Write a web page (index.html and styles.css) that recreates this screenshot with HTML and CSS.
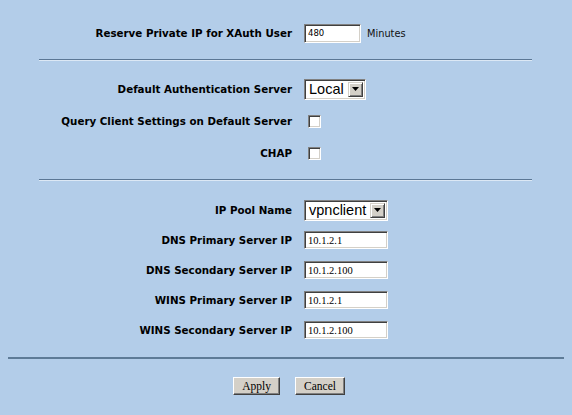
FILE: index.html
```html
<!DOCTYPE html>
<html>
<head>
<meta charset="utf-8">
<link rel="stylesheet" href="styles.css">
</head>
<body>
<div class="page">
  <div class="section s1">
    <div class="row">
      <div class="label">Reserve Private IP for XAuth User</div>
      <div class="ctrl"><span class="field field-min">480</span><span class="unit">Minutes</span></div>
    </div>
  </div>
  <div class="sep"></div>
  <div class="section s2">
    <div class="row">
      <div class="label">Default Authentication Server</div>
      <div class="ctrl"><span class="select sel-local"><span class="sel-text">Local</span><span class="sel-btn"><svg width="7" height="4" viewBox="0 0 7 4"><path d="M0 0h7L3.5 4z" fill="#000"/></svg></span></span></div>
    </div>
    <div class="row">
      <div class="label">Query Client Settings on Default Server</div>
      <div class="ctrl"><span class="check"></span></div>
    </div>
    <div class="row">
      <div class="label">CHAP</div>
      <div class="ctrl"><span class="check"></span></div>
    </div>
  </div>
  <div class="sep"></div>
  <div class="section s3">
    <div class="row">
      <div class="label">IP Pool Name</div>
      <div class="ctrl"><span class="select sel-pool"><span class="sel-text">vpnclient</span><span class="sel-btn"><svg width="7" height="4" viewBox="0 0 7 4"><path d="M0 0h7L3.5 4z" fill="#000"/></svg></span></span></div>
    </div>
    <div class="row">
      <div class="label">DNS Primary Server IP</div>
      <div class="ctrl"><span class="field field-ip">10.1.2.1</span></div>
    </div>
    <div class="row">
      <div class="label">DNS Secondary Server IP</div>
      <div class="ctrl"><span class="field field-ip">10.1.2.100</span></div>
    </div>
    <div class="row">
      <div class="label">WINS Primary Server IP</div>
      <div class="ctrl"><span class="field field-ip">10.1.2.1</span></div>
    </div>
    <div class="row">
      <div class="label">WINS Secondary Server IP</div>
      <div class="ctrl"><span class="field field-ip">10.1.2.100</span></div>
    </div>
  </div>
  <div class="sep-wide"></div>
  <div class="buttons">
    <span class="btn btn-apply">Apply</span>
    <span class="btn btn-cancel">Cancel</span>
  </div>
</div>
</body>
</html>
```
FILE: styles.css
```css
html, body {
  margin: 0;
  padding: 0;
  background: #b3cde9;
}
body {
  width: 572px;
  height: 415px;
  overflow: hidden;
  font-family: "DejaVu Sans", Verdana, sans-serif;
  color: #000;
}
.page {
  padding-top: 18px;
}
.section {
  display: flex;
  flex-direction: column;
}
.s2 {
  margin-top: 13px;
  gap: 2px;
}
.s3 {
  margin-top: 14px;
}
.row {
  display: grid;
  grid-template-columns: 292px auto;
  column-gap: 12px;
  align-items: center;
  height: 30px;
}
.label {
  text-align: right;
  font-weight: bold;
  font-size: 10.3px;
  white-space: nowrap;
}
.ctrl {
  display: flex;
  align-items: center;
}
.sep {
  margin: 11px 40px 0 39px;
  border-top: 1px solid #5b7795;
  border-bottom: 1px solid #dce8f5;
}
.sep-wide {
  margin: 12px 8px 0 8px;
  height: 2px;
  background: #5e7b97;
}
.field {
  box-sizing: border-box;
  display: flex;
  align-items: center;
  background: #fff;
  border-top: 1px solid #808080;
  border-left: 1px solid #808080;
  border-right: 1px solid #ffffff;
  border-bottom: 1px solid #ffffff;
  box-shadow: inset 1px 1px 0 #404040, inset -1px -1px 0 #d4d0c8;
  padding-left: 3px;
  white-space: nowrap;
}
.field-min {
  width: 57px;
  height: 19px;
  font-family: "DejaVu Sans", sans-serif;
  font-size: 8.5px;
}
.unit {
  margin-left: 6px;
  font-size: 9.8px;
  color: #111;
}
.field-ip {
  width: 84px;
  height: 18px;
  font-family: "Liberation Serif", "Times New Roman", serif;
  font-size: 10.5px;
}
.select {
  box-sizing: border-box;
  display: flex;
  align-items: center;
  justify-content: space-between;
  height: 21px;
  background: #fff;
  border-top: 1px solid #808080;
  border-left: 1px solid #808080;
  border-right: 1px solid #ffffff;
  border-bottom: 1px solid #ffffff;
  box-shadow: inset 1px 1px 0 #404040, inset -1px -1px 0 #d4d0c8;
  padding: 2px 2px 2px 4px;
  font-family: "Liberation Sans", Arial, sans-serif;
  font-size: 14.5px;
  white-space: nowrap;
}
.sel-local {
  width: 62px;
}
.sel-pool {
  width: 84px;
}
.sel-text {
  line-height: 16px;
}
.sel-btn {
  box-sizing: border-box;
  flex: none;
  width: 15px;
  height: 15px;
  display: flex;
  align-items: center;
  justify-content: center;
  background: #d4d0c8;
  border-top: 1px solid #d4d0c8;
  border-left: 1px solid #d4d0c8;
  border-right: 1px solid #404040;
  border-bottom: 1px solid #404040;
  box-shadow: inset 1px 1px 0 #fff, inset -1px -1px 0 #808080;
}
.check {
  box-sizing: border-box;
  display: block;
  width: 13px;
  height: 13px;
  margin-left: 4px;
  background: #fff;
  border-top: 1px solid #808080;
  border-left: 1px solid #808080;
  border-right: 1px solid #ffffff;
  border-bottom: 1px solid #ffffff;
  box-shadow: inset 1px 1px 0 #404040, inset -1px -1px 0 #d4d0c8;
}
.buttons {
  display: flex;
  justify-content: center;
  gap: 15px;
  margin-top: 18px;
  padding-left: 6px;
}
.btn {
  box-sizing: border-box;
  display: flex;
  align-items: center;
  justify-content: center;
  height: 18px;
  background: #d4d0c8;
  border-top: 1px solid #ffffff;
  border-left: 1px solid #ffffff;
  border-right: 1px solid #404040;
  border-bottom: 1px solid #404040;
  box-shadow: inset -1px -1px 0 #808080;
  font-family: "Liberation Serif", "Times New Roman", serif;
  font-size: 11.5px;
}
.btn-apply {
  width: 47px;
}
.btn-cancel {
  width: 50px;
}
```
